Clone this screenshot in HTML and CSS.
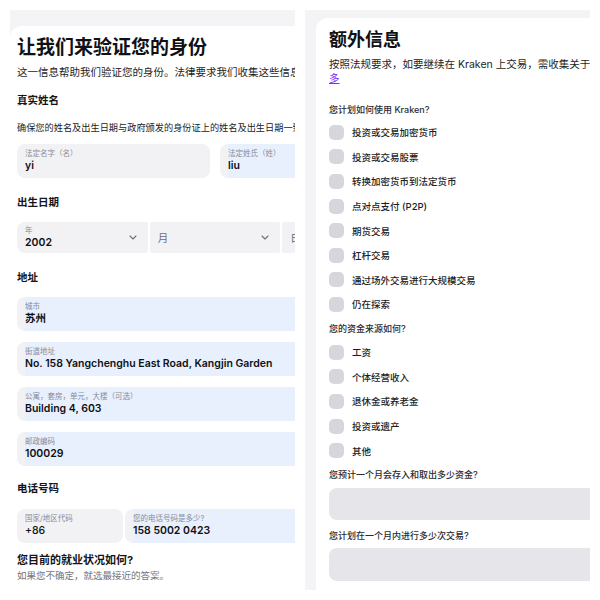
FILE: index.html
```html
<!DOCTYPE html>
<html lang="zh-CN">
<head>
  <meta charset="UTF-8" />
  <meta name="viewport" content="width=device-width, initial-scale=1.0"/>
  <title>验证身份</title>
  <link rel="stylesheet" href="styles.css">
</head>
<body>
  <div class="screens">

    <!-- ======= VERIFIKASI IDENTITAS ======= -->
    <section class="panel panel-id">
      <div class="card">
        <div class="content">
          <h1>让我们来验证您的身份</h1>
          <p class="lead">这一信息帮助我们验证您的身份。法律要求我们收集这些信息，以保护您的账户安全。</p>

          <h2 class="sec-name">真实姓名</h2>
          <p class="hint">确保您的姓名及出生日期与政府颁发的身份证上的姓名及出生日期一致。</p>
          <div class="row name-row">
            <div class="field">
              <div class="inner"><span class="label">法定名字（名）</span><span class="value">yi</span></div>
            </div>
            <div class="field filled">
              <div class="inner"><span class="label">法定姓氏（姓）</span><span class="value">liu</span></div>
            </div>
          </div>

          <h2 class="sec-date">出生日期</h2>
          <div class="row dates">
            <div class="select">
              <div class="sel-text"><span class="label">年</span><span class="value">2002</span></div>
              <svg class="chev" viewBox="0 0 8 5"><path d="M1 1l3 3 3-3" /></svg>
            </div>
            <div class="select">
              <div class="sel-text"><span class="placeholder">月</span></div>
              <svg class="chev" viewBox="0 0 8 5"><path d="M1 1l3 3 3-3" /></svg>
            </div>
            <div class="select">
              <div class="sel-text"><span class="placeholder">日</span></div>
              <svg class="chev" viewBox="0 0 8 5"><path d="M1 1l3 3 3-3" /></svg>
            </div>
          </div>

          <h2 class="sec-addr">地址</h2>
          <div class="stack">
            <div class="field filled">
              <div class="inner"><span class="label">城市</span><span class="value">苏州</span></div>
            </div>
            <div class="field filled">
              <div class="inner"><span class="label">街道地址</span><span class="value">No. 158 Yangchenghu East Road, Kangjin Garden</span></div>
            </div>
            <div class="field filled">
              <div class="inner"><span class="label">公寓，套房，单元，大楼（可选）</span><span class="value">Building 4, 603</span></div>
            </div>
            <div class="field filled">
              <div class="inner"><span class="label">邮政编码</span><span class="value">100029</span></div>
            </div>
          </div>

          <h2 class="sec-phone">电话号码</h2>
          <div class="row phone-row">
            <div class="field code">
              <div class="inner"><span class="label">国家/地区代码</span><span class="value light">+86</span></div>
            </div>
            <div class="field filled">
              <div class="inner"><span class="label">您的电话号码是多少?</span><span class="value">158 5002 0423</span></div>
            </div>
          </div>

          <h3>您目前的就业状况如何?</h3>
          <p class="muted">如果您不确定，就选最接近的答案。</p>
        </div>
      </div>
    </section>

    <!-- ======= INFO TAMBAHAN ======= -->
    <section class="panel panel-extra">
      <div class="card">
        <div class="content">
          <h1>额外信息</h1>
          <p class="lead wrap">按照法规要求，如要继续在 Kraken 上交易，需收集关于您的一些信息。<a href="#">了解更<br>多</a></p>

          <p class="question q-use">您计划如何使用 Kraken?</p>
          <ul class="checks">
            <li><span class="box"></span>投资或交易加密货币</li>
            <li><span class="box"></span>投资或交易股票</li>
            <li><span class="box"></span>转换加密货币到法定货币</li>
            <li><span class="box"></span>点对点支付 (P2P)</li>
            <li><span class="box"></span>期货交易</li>
            <li><span class="box"></span>杠杆交易</li>
            <li><span class="box"></span>通过场外交易进行大规模交易</li>
            <li><span class="box"></span>仍在探索</li>
          </ul>

          <p class="question q-funds">您的资金来源如何?</p>
          <ul class="checks">
            <li><span class="box"></span>工资</li>
            <li><span class="box"></span>个体经营收入</li>
            <li><span class="box"></span>退休金或养老金</li>
            <li><span class="box"></span>投资或遗产</li>
            <li><span class="box"></span>其他</li>
          </ul>

          <p class="question q-amount">您预计一个月会存入和取出多少资金?</p>
          <div class="dropdown amount"></div>

          <p class="question q-count">您计划在一个月内进行多少次交易?</p>
          <div class="dropdown count"></div>
        </div>
      </div>
    </section>

  </div>
</body>
</html>
```

FILE: styles.css
```css
* {
  box-sizing: border-box;
}

body {
  font-family: Inter, "Noto Sans CJK SC", sans-serif;
  margin: 0;
  padding: 0;
  background: #fff;
  color: #141419;
}

/* ===== LAYOUT ===== */
.screens {
  display: flex;
  gap: 10px;
  padding: 10px;
  height: 600px;
}

.panel {
  width: 285px;
  height: 580px;
  overflow: hidden;
  background: #f4f4f7;
}

.panel-id {
  padding-top: 16px;
}

.panel-extra {
  padding: 8px 0 0 11px;
}

.card {
  background: #fff;
  border-top-left-radius: 12px;
  height: 100%;
}

.panel-id .card {
  padding: 10px 0 0 7px;
}

.panel-extra .card {
  padding: 11px 0 0 13px;
}

.panel-id .content {
  width: 396px;
}

.panel-extra .content {
  width: 320px;
}

h1 {
  margin: 0;
  font-size: 19px;
  line-height: 24px;
  font-weight: 600;
  color: #101114;
}

.panel-extra h1 {
  font-size: 18px;
  line-height: 22px;
}

.lead {
  margin: 6px 0 0;
  font-size: 10.5px;
  line-height: 14px;
  color: #1d1d24;
  white-space: nowrap;
}

.lead.wrap {
  margin-top: 7px;
}

.lead a {
  color: #7132f5;
  text-decoration: underline;
}

h2 {
  margin: 18px 0 0;
  font-size: 10.5px;
  line-height: 14px;
  font-weight: 600;
}

.sec-name {
  margin-top: 14px;
}

.sec-phone {
  margin-top: 16px;
}

.hint {
  margin: 12.5px 0 0;
  font-size: 9.2px;
  line-height: 13px;
  color: #222;
  white-space: nowrap;
}

h3 {
  margin: 10px 0 0;
  font-size: 11px;
  line-height: 14px;
  font-weight: 700;
}

.muted {
  margin: 1.5px 0 0;
  font-size: 9.5px;
  line-height: 13px;
  color: #75757f;
}

/* ===== FIELDS ===== */
.row {
  display: flex;
  gap: 10px;
}

.name-row {
  margin-top: 10.5px;
}

.name-row .field {
  flex: 1;
}

.stack {
  display: flex;
  flex-direction: column;
  gap: 11px;
  margin-top: 12px;
}

.field {
  height: 34px;
  border-radius: 8px;
  background: #f2f2f5;
  padding-left: 8px;
  overflow: hidden;
}

.field .inner {
  height: 100%;
  padding-top: 5px;
  display: flex;
  flex-direction: column;
}

.field.filled .inner {
  background: #e8f0fe;
}

.label {
  font-size: 7.5px;
  line-height: 10px;
  color: #8b8b96;
  white-space: nowrap;
}

.value {
  font-size: 10.5px;
  line-height: 14px;
  font-weight: 600;
  color: #101114;
  white-space: nowrap;
}

.value.light {
  font-weight: 500;
}

.phone-row {
  gap: 2px;
  margin-top: 13px;
}

.phone-row .code {
  width: 106px;
}

.phone-row .filled {
  flex: 1;
}

/* ===== DATE SELECTS ===== */
.dates {
  gap: 2px;
  margin-top: 12px;
}

.select {
  flex: 1;
  height: 31px;
  background: #f2f2f5;
  border-radius: 2px;
  display: flex;
  align-items: center;
  justify-content: space-between;
  padding: 0 11px 0 8px;
}

.select:first-child {
  border-radius: 8px 2px 2px 8px;
}

.select:last-child {
  border-radius: 2px 8px 8px 2px;
}

.sel-text {
  display: flex;
  flex-direction: column;
}

.sel-text .label {
  color: #8b8b96;
}

.placeholder {
  font-size: 10.5px;
  color: #6b6b75;
}

.chev {
  width: 8px;
  height: 5px;
  fill: none;
  stroke: #6e6e78;
  stroke-width: 1.1;
  stroke-linecap: round;
  stroke-linejoin: round;
}

/* ===== EXTRA INFO ===== */
.question {
  margin: 0;
  font-size: 9px;
  line-height: 20px;
  font-weight: 500;
  color: #2a2a31;
}

.q-use {
  margin-top: 14px;
}

.q-funds {
  margin-top: 1.2px;
  line-height: 22px;
}

.q-amount {
  margin-top: 2px;
}

.q-count {
  margin-top: 6px;
}

.checks {
  list-style: none;
  margin: 0;
  padding: 0;
}

.checks li {
  height: 24.6px;
  display: flex;
  align-items: center;
  gap: 8px;
  font-size: 9.5px;
  font-weight: 500;
  color: #1d1d24;
}

.box {
  width: 15px;
  height: 15px;
  border-radius: 5px;
  background: #d6d6dd;
  flex-shrink: 0;
}

.dropdown {
  height: 32px;
  border-radius: 8px;
  background: #e5e5ea;
}

.dropdown.amount {
  margin-top: 3px;
}

.dropdown.count {
  margin-top: 2px;
  height: 33px;
}
```
